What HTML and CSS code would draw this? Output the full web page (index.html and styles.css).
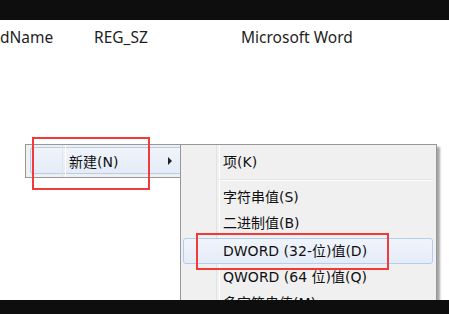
FILE: index.html
```html
<!DOCTYPE html>
<html lang="zh-CN">

<head>
    <meta charset="UTF-8">
    <title>注册表 新建</title>
    <link rel="stylesheet" href="styles.css">
</head>

<body>
    <div class="bar"></div>
    <div class="main">
        <div class="row">
            <span class="c1">dName</span>
            <span class="c2">REG_SZ</span>
            <span class="c3">Microsoft Word</span>
        </div>

        <div class="menu parent">
            <div class="item hot">
                <span class="txt">新建(N)</span>
                <i class="arrow"></i>
            </div>
        </div>

        <div class="menu sub">
            <div class="item">项(K)</div>
            <div class="sep"></div>
            <div class="item">字符串值(S)</div>
            <div class="item">二进制值(B)</div>
            <div class="item hot">DWORD (32-位)值(D)</div>
            <div class="item">QWORD (64 位)值(Q)</div>
            <div class="item">多字符串值(M)</div>
        </div>

        <div class="mark mark1"></div>
        <div class="mark mark2"></div>
    </div>
    <div class="bar bottom"></div>
</body>

</html>
```

FILE: styles.css
```css
* {
    margin: 0;
    padding: 0;
    box-sizing: border-box;
}

body {
    width: 449px;
    height: 314px;
    overflow: hidden;
    background: #fff;
    font-family: "Noto Sans", "Noto Sans CJK SC", sans-serif;
    color: #1e1e1e;
}

.bar {
    height: 20px;
    background: #0e0e0e;
}

.bar.bottom {
    height: 14px;
}

.main {
    height: 280px;
    position: relative;
    overflow: hidden;
}

.row {
    display: flex;
    font-size: 15.5px;
    line-height: 20px;
    padding-top: 7px;
}

.c1 {
    width: 94px;
}

.c2 {
    width: 147px;
}

/* context menus */
.menu {
    position: absolute;
    background: #f0f0f0;
    border: 1px solid #979797;
    font-family: "DejaVu Sans", "Noto Sans CJK SC", sans-serif;
    font-size: 14px;
    color: #111;
}

.menu::before {
    content: "";
    position: absolute;
    top: 0;
    bottom: 0;
    width: 2px;
    border-left: 1px solid #e2e3e3;
    border-right: 1px solid #fff;
}

.parent {
    left: 25px;
    top: 124px;
    width: 160px;
    height: 34px;
    padding: 2px 0 2px 4px;
}

.parent::before {
    left: 36px;
}

.parent .item {
    height: 27px;
    display: flex;
    align-items: center;
    padding-left: 38px;
}

.parent .txt {
    flex: 1;
}

.arrow {
    width: 0;
    height: 0;
    border-left: 4px solid #222;
    border-top: 4px solid transparent;
    border-bottom: 4px solid transparent;
    margin-right: 11px;
}

.sub {
    left: 180px;
    top: 124px;
    width: 257px;
    height: 190px;
    padding: 4px 3px 0 2px;
    box-shadow: 3px 3px 2px rgba(0, 0, 0, 0.35);
}

.sub::before {
    left: 35px;
}

.sub .item {
    position: relative;
    height: 26px;
    line-height: 24px;
    padding-left: 39px;
    border: 1px solid transparent;
}

.sub .item:first-child {
    height: 28px;
}

.sep {
    position: relative;
    height: 2px;
    margin: 2px 0 3px 36px;
    border-top: 1px solid #e2e3e3;
    border-bottom: 1px solid #fff;
}

.item.hot {
    background: linear-gradient(#f0f4fb, #e4ecf7);
    border: 1px solid #b3cdee;
    border-radius: 3px;
}

.sub .item.hot {
    height: 26px;
    margin-top: 2px;
}

/* red annotation boxes */
.mark {
    position: absolute;
    border: 2px solid #f23a3a;
}

.mark1 {
    left: 32px;
    top: 117px;
    width: 118px;
    height: 53px;
}

.mark2 {
    left: 196px;
    top: 213px;
    width: 193px;
    height: 37px;
}
```
